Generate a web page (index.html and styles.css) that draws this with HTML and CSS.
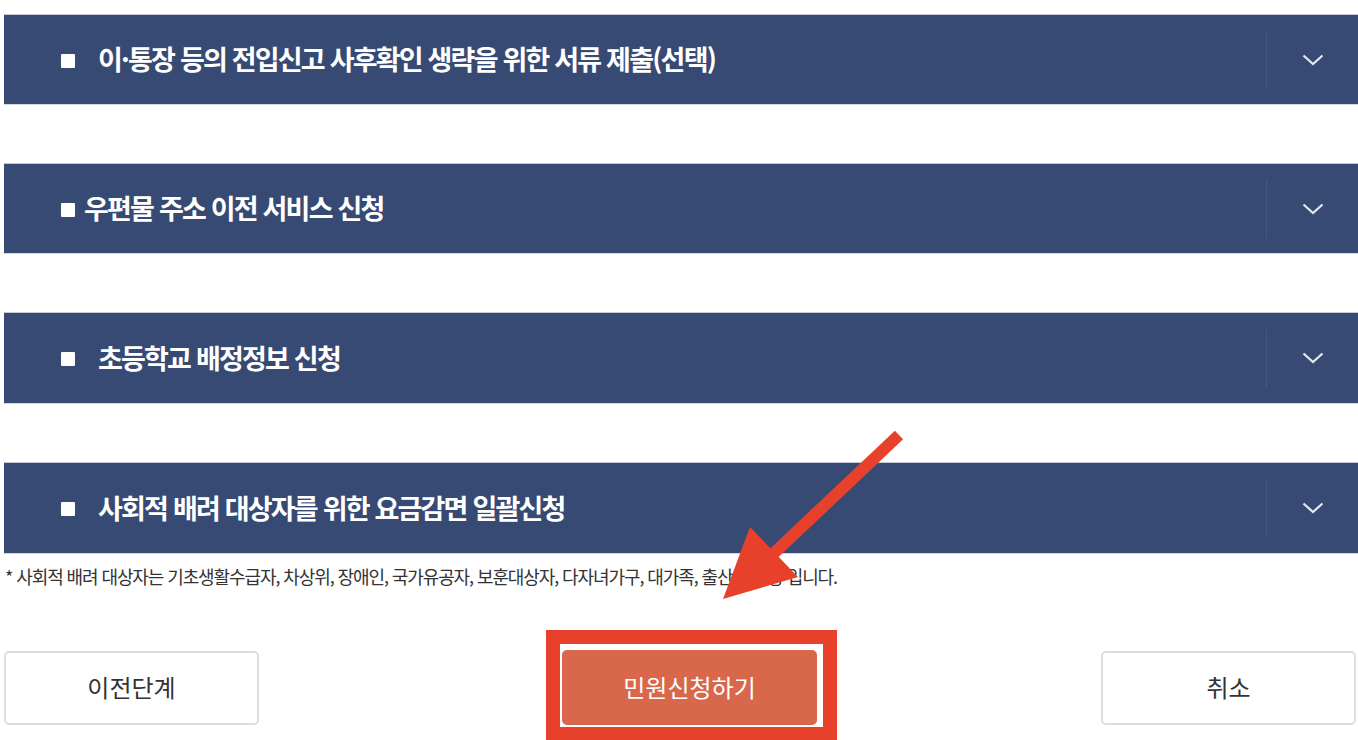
FILE: index.html
```html
<!DOCTYPE html>
<html lang="ko">
<head>
    <meta charset="UTF-8">
    <meta name="viewport" content="width=device-width, initial-scale=1.0">
    <title>민원신청</title>
    <link rel="stylesheet" href="styles.css">
</head>
<body>
<div id="page">
    <div class="sections">
        <div class="section">
            <span class="bullet"></span>
            <span class="title">이·통장 등의 전입신고 사후확인 생략을 위한 서류 제출(선택)</span>
            <span class="toggle"><svg width="22" height="12" viewBox="0 0 22 12"><path d="M1.5 1.5 L11 10 L20.5 1.5" /></svg></span>
        </div>
        <div class="section">
            <span class="bullet tight"></span>
            <span class="title">우편물 주소 이전 서비스 신청</span>
            <span class="toggle"><svg width="22" height="12" viewBox="0 0 22 12"><path d="M1.5 1.5 L11 10 L20.5 1.5" /></svg></span>
        </div>
        <div class="section">
            <span class="bullet"></span>
            <span class="title">초등학교 배정정보 신청</span>
            <span class="toggle"><svg width="22" height="12" viewBox="0 0 22 12"><path d="M1.5 1.5 L11 10 L20.5 1.5" /></svg></span>
        </div>
        <div class="section">
            <span class="bullet"></span>
            <span class="title">사회적 배려 대상자를 위한 요금감면 일괄신청</span>
            <span class="toggle"><svg width="22" height="12" viewBox="0 0 22 12"><path d="M1.5 1.5 L11 10 L20.5 1.5" /></svg></span>
        </div>
    </div>
    <p class="note">* 사회적 배려 대상자는 기초생활수급자, 차상위, 장애인, 국가유공자, 보훈대상자, 다자녀가구, 대가족, 출산가구 등 입니다.</p>
    <div class="actions">
        <button class="btn">이전단계</button>
        <div class="highlight">
            <button class="btn primary">민원신청하기</button>
        </div>
        <button class="btn cancel">취소</button>
    </div>
    <!-- 안내 화살표 -->
    <svg class="arrow" width="1358" height="740" viewBox="0 0 1358 740">
        <line x1="899" y1="435" x2="772" y2="555" />
        <polygon points="723,599 750,527 798,577" />
    </svg>
</div>
</body>
</html>
```
FILE: styles.css
```css
html, body {
    margin: 0;
    background: #fff;
}

#page {
    position: relative;
    width: 1358px;
    height: 740px;
    overflow: hidden;
    padding: 15px 2px 0 4px;
    box-sizing: border-box;
    font-family: "Noto Sans CJK KR", "Noto Sans", sans-serif;
}

.sections {
    display: flex;
    flex-direction: column;
    gap: 60px;
}

.section {
    display: flex;
    align-items: center;
    height: 89px;
    margin-right: -2px;
    padding-left: 57px;
    background: #374a73;
    box-shadow: 0 -1px 0 #c3c9d6, 0 1px 0 #d3d7e0;
}

.section:nth-child(3),
.section:nth-child(4) {
    height: 90px;
}

.bullet {
    flex: none;
    width: 14px;
    height: 14px;
    margin: 2px 23px 0 0;
    background: #fff;
    border-radius: 1px;
}

.bullet.tight {
    margin-right: 9px;
}

.title {
    margin-top: -2px;
    color: #fff;
    font-size: 27px;
    font-weight: 700;
    letter-spacing: -1.8px;
    white-space: nowrap;
}

.toggle {
    display: flex;
    align-items: center;
    justify-content: center;
    margin-left: auto;
    width: 91px;
    height: 59px;
    border-left: 1px solid #46587f;
}

.toggle svg path {
    fill: none;
    stroke: #e6e9ef;
    stroke-width: 2.2;
}

.note {
    margin: 11px 0 0 1px;
    height: 24px;
    font-size: 18px;
    line-height: 24px;
    letter-spacing: -1.1px;
    color: #333;
    white-space: nowrap;
}

.actions {
    display: flex;
    align-items: flex-start;
    margin-top: 42px;
}

.btn {
    width: 255px;
    height: 74px;
    margin-top: 21px;
    padding: 0 0 3px;
    background: #fff;
    border: 2px solid #dcdcdc;
    border-radius: 5px;
    font-family: inherit;
    font-size: 24px;
    font-weight: 400;
    color: #333;
}

.highlight {
    margin-left: 287px;
    padding: 6px 6px 2px 2px;
    border: 14px solid #e8412b;
    background: #fff;
}

.btn.primary {
    display: block;
    margin: 0;
    height: 75px;
    background: #d9674b;
    border-color: #d9674b;
    color: #fff;
}

.btn.cancel {
    margin-left: auto;
}

.arrow {
    position: absolute;
    left: 0;
    top: 0;
    pointer-events: none;
}

.arrow line {
    stroke: #e8412b;
    stroke-width: 12;
}

.arrow polygon {
    fill: #e8412b;
}
```
